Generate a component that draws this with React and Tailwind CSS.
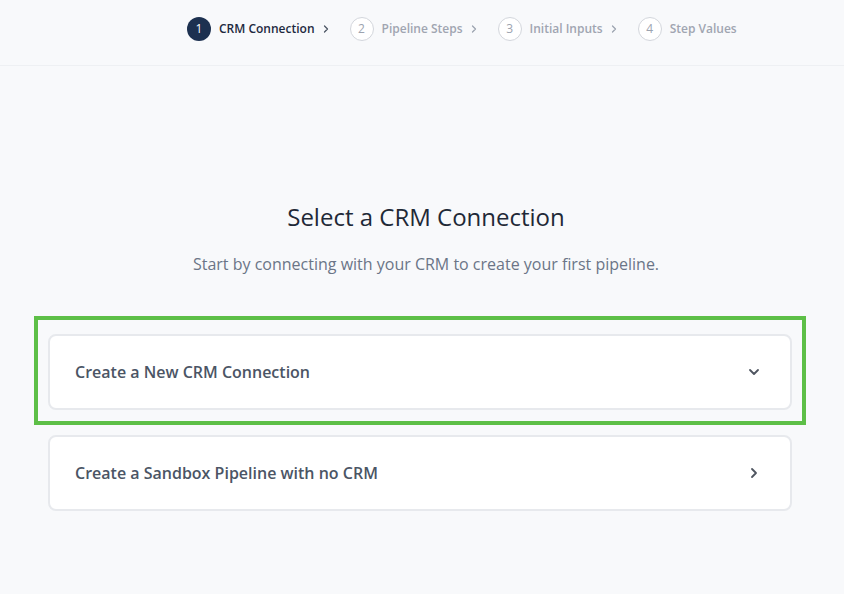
import React from 'react';
import { ChevronRight, ChevronDown } from 'lucide-react';

const steps = [
  { n: 1, label: 'CRM Connection', active: true },
  { n: 2, label: 'Pipeline Steps' },
  { n: 3, label: 'Initial Inputs' },
  { n: 4, label: 'Step Values', last: true },
];

const App = () => {
  return (
    <div className="min-h-[594px] bg-[#f8f9fb] font-['Open_Sans',sans-serif]">
      {/* Stepper header */}
      <div className="h-[66px] border-b border-[#eef0f3] flex items-start pt-[17px] pl-[187px]">
        {steps.map((s) => (
          <div key={s.n} className="flex items-center">
            <div
              className={
                s.active
                  ? 'w-6 h-6 rounded-full bg-[#1d3150] text-white text-[12px] flex items-center justify-center'
                  : 'w-6 h-6 rounded-full border border-[#d3d6dc] bg-white text-[#9ca3af] text-[12px] flex items-center justify-center'
              }
            >
              {s.n}
            </div>
            <span
              className={
                s.active
                  ? 'ml-2 text-[12px] font-semibold text-[#1d2940]'
                  : 'ml-2 text-[12px] font-semibold text-[#a0a5b1]'
              }
            >
              {s.label}
            </span>
            {!s.last && (
              <ChevronRight
                size={12}
                strokeWidth={2.5}
                className={s.active ? 'ml-[5px] mr-[18px] text-[#4b5563]' : 'ml-[5px] mr-[18px] text-[#9ca3af]'}
              />
            )}
          </div>
        ))}
      </div>

      {/* Heading */}
      <div className="pt-[135px] pl-2 text-center">
        <h1 className="text-[24px] leading-[32px] font-medium text-[#1f2937]">Select a CRM Connection</h1>
        <p className="mt-[20px] text-[16px] leading-[22px] text-[#6b7587]">
          Start by connecting with your CRM to create your first pipeline.
        </p>
      </div>

      {/* Options */}
      <div className="ml-[48px] w-[744px] mt-[59px] flex flex-col gap-[25px]">
        <div className="relative">
          <div className="h-[76px] bg-white border-2 border-[#e7e9ed] rounded-lg flex items-center justify-between pl-[25px] pr-[28px]">
            <span className="text-[16px] font-semibold text-[#4b5565]">Create a New CRM Connection</span>
            <ChevronDown size={16} strokeWidth={2.75} className="text-[#4f5560]" />
          </div>
          <div className="absolute -left-[14px] -right-[14px] -top-[18px] -bottom-[15px] border-4 border-[#5dbf47] pointer-events-none" />
        </div>
        <div className="h-[76px] bg-white border-2 border-[#e7e9ed] rounded-lg flex items-center justify-between pl-[25px] pr-[28px]">
          <span className="text-[16px] font-semibold text-[#4b5565]">Create a Sandbox Pipeline with no CRM</span>
          <ChevronRight size={16} strokeWidth={2.75} className="text-[#4f5560]" />
        </div>
      </div>
    </div>
  );
};

export default App;
